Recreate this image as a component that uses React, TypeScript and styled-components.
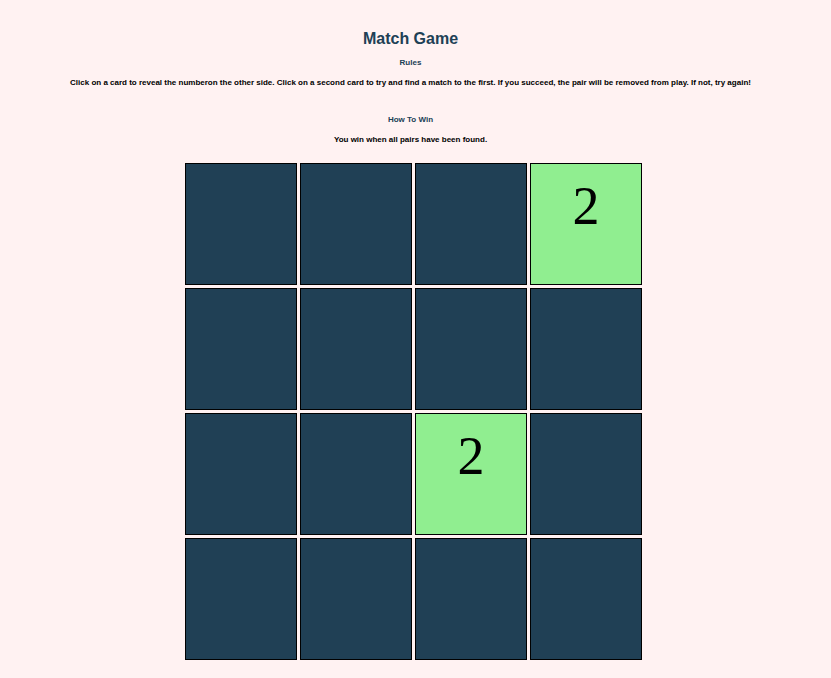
import React, { useState } from "react";
import styled, { createGlobalStyle } from "styled-components";

const GlobalStyle = createGlobalStyle`
  body {
    margin: 0;
    background: #fff2f2;
    color: #000;
  }
`;

const Page = styled.main`
  display: flex;
  flex-direction: column;
  align-items: center;
  padding: 29px 10px 16px 0;
  text-align: center;
  font-family: "Liberation Sans", Arial, sans-serif;
`;

const Title = styled.h1`
  margin: 0;
  color: #204055;
  font-size: 16px;
  line-height: 20px;
`;

const Section = styled.section`
  margin-bottom: 17px;
`;

const Subtitle = styled.h2`
  margin: 0;
  padding: 8px 0;
  color: #204055;
  font-size: 8px;
  line-height: 12px;
`;

const Copy = styled.p`
  margin: 0;
  font-size: 8px;
  font-weight: 700;
  line-height: 12px;
`;

const Board = styled.div`
  display: grid;
  grid-template-columns: repeat(4, 112px);
  grid-auto-rows: 122px;
  gap: 3px;
  padding-left: 6px;
`;

const Card = styled.button<{ $open: boolean }>`
  display: flex;
  justify-content: center;
  align-items: flex-start;
  margin: 0;
  padding: 12px 0 0;
  border: 1px solid #000;
  border-radius: 0;
  background: ${({ $open }) => ($open ? "#90ee90" : "#204055")};
  color: #000;
  font-family: "Liberation Serif", "Times New Roman", serif;
  font-size: 54px;
  line-height: 60px;
  cursor: pointer;
`;

const values = [5, 1, 7, 2, 3, 8, 4, 6, 1, 5, 2, 7, 6, 3, 8, 4];

export default function App() {
  const [open, setOpen] = useState<number[]>([3, 10]);

  const reveal = (index: number) =>
    setOpen((current) => (current.includes(index) ? current : [...current, index]));

  return (
    <>
      <GlobalStyle />
      <Page>
        <Title>Match Game</Title>
        <Section>
          <Subtitle>Rules</Subtitle>
          <Copy>
            Click on a card to reveal the numberon the other side. Click on a second card to try
            and find a match to the first. If you succeed, the pair will be removed from play. If
            not, try again!
          </Copy>
        </Section>
        <Section>
          <Subtitle>How To Win</Subtitle>
          <Copy>You win when all pairs have been found.</Copy>
        </Section>
        <Board>
          {values.map((value, index) => (
            <Card
              key={index}
              type="button"
              aria-label={open.includes(index) ? undefined : `Card ${index + 1}`}
              $open={open.includes(index)}
              onClick={() => reveal(index)}
            >
              {open.includes(index) ? value : null}
            </Card>
          ))}
        </Board>
      </Page>
    </>
  );
}
